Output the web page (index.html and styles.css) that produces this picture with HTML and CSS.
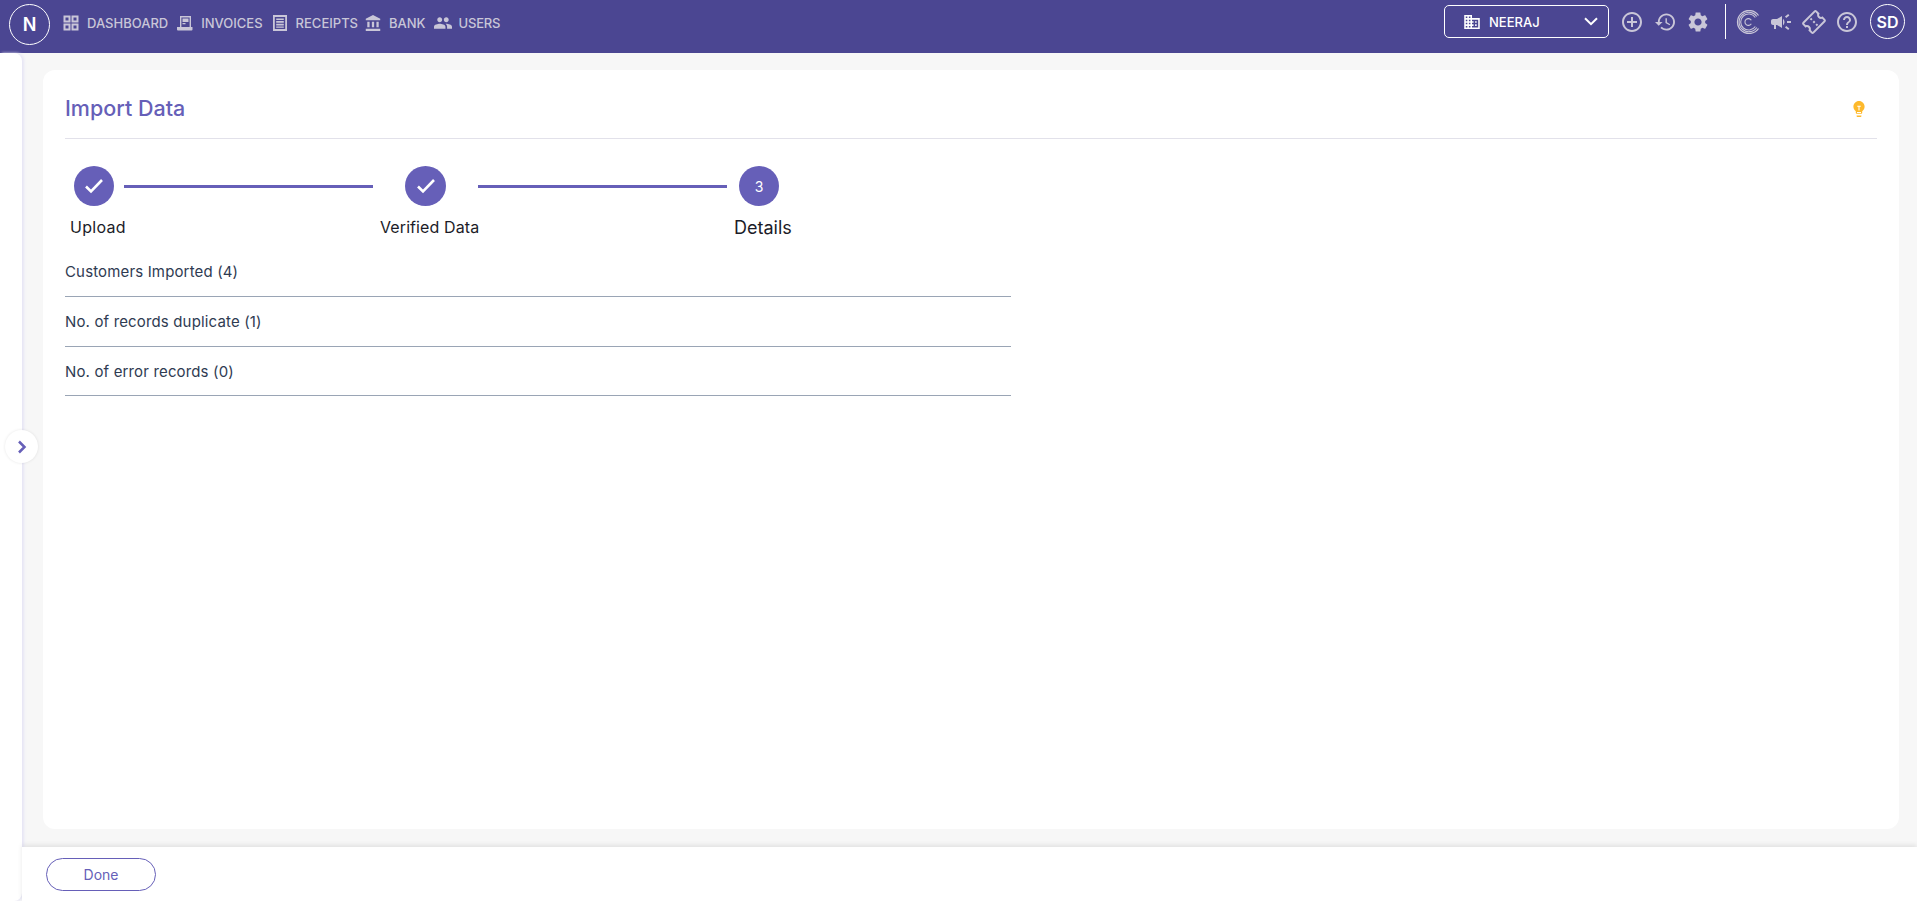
FILE: index.html
```html
<!DOCTYPE html>
<html lang="en">
<head>
    <meta charset="UTF-8">
    <title>Import Data</title>
    <link rel="stylesheet" href="styles.css">
</head>
<body>

    <!-- Top bar -->
    <header class="topbar">
        <div class="avatar brand">N</div>
        <nav class="main-nav">
            <a class="nav-item nav-dashboard">
                <svg class="nav-icon" viewBox="0 0 16 16" fill="none" stroke="currentColor" stroke-width="2"><path d="M1.500 1.500h5v5h-5zM9.500 1.500h5v5h-5zM1.500 9.500h5v5h-5zM9.500 9.500h5v5h-5z"/></svg>
                <span>DASHBOARD</span>
            </a>
            <a class="nav-item nav-invoices">
                <svg class="nav-icon" viewBox="0 0 16 16" fill="currentColor"><path d="M3 1h11v11h1.500v2.500a1 1 0 0 1-1 1H1a1 1 0 0 1-1-1V12h3zM4.400 2.400V12h8.200V2.400zM5.500 3.500h6v3.500h-6zM5.500 8h3v1.200h-3z" fill-rule="evenodd"/></svg>
                <span>INVOICES</span>
            </a>
            <a class="nav-item nav-receipts">
                <svg class="nav-icon" viewBox="0 0 16 16" fill="currentColor"><path d="M1 0h14v16H1zM2.800 2v12h10.400V2zM4.200 3.400h7.600v1.700H4.200zM4.200 6.100h7.600v1.700H4.200zM4.200 8.800h7.600v1.700H4.200zM4.200 11.400h7.600v1.300H4.200z" fill-rule="evenodd"/></svg>
                <span>RECEIPTS</span>
            </a>
            <a class="nav-item nav-bank">
                <svg class="nav-icon" viewBox="2 1 19 21" fill="currentColor"><path d="M4 10v7h3v-7H4zm6 0v7h3v-7h-3zM2 22h19v-3H2v3zm14-12v7h3v-7h-3zm-4.500-9L2 6v2h19V6l-9.500-5z"/></svg>
                <span>BANK</span>
            </a>
            <a class="nav-item nav-users">
                <svg class="nav-icon" viewBox="1 4 22 16" fill="currentColor"><path d="M16 11c1.660 0 2.990-1.340 2.990-3S17.660 5 16 5c-1.660 0-3 1.340-3 3s1.340 3 3 3zm-8 0c1.660 0 2.990-1.340 2.990-3S9.660 5 8 5C6.340 5 5 6.340 5 8s1.340 3 3 3zm0 2c-2.330 0-7 1.170-7 3.500V19h14v-2.500c0-2.330-4.670-3.500-7-3.500zm8 0c-.290 0-.620.020-.970.050 1.160.840 1.970 1.970 1.970 3.450V19h6v-2.500c0-2.330-4.670-3.500-7-3.500z"/></svg>
                <span>USERS</span>
            </a>
        </nav>

        <div class="top-actions">
            <div class="company-select">
                <svg class="company-icon" viewBox="2 3 20 18" fill="currentColor"><path d="M12 7V3H2v18h20V7H12zM6 19H4v-2h2v2zm0-4H4v-2h2v2zm0-4H4V9h2v2zm0-4H4V5h2v2zm4 12H8v-2h2v2zm0-4H8v-2h2v2zm0-4H8V9h2v2zm0-4H8V5h2v2zm10 12h-8v-2h2v-2h-2v-2h2v-2h-2V9h8v10zm-2-8h-2v2h2v-2zm0 4h-2v2h2v-2z"/></svg>
                <span class="company-name">NEERAJ</span>
                <svg class="chevron" viewBox="0 0 14 9" fill="none" stroke="currentColor" stroke-width="2"><path d="M1 1.200l6 6 6-6"/></svg>
            </div>
            <div class="icon-group">
                <svg class="action-icon" viewBox="2 2 20 20" fill="currentColor"><path d="M13 7h-2v4H7v2h4v4h2v-4h4v-2h-4V7zm-1-5C6.480 2 2 6.480 2 12s4.480 10 10 10 10-4.480 10-10S17.520 2 12 2zm0 18c-4.410 0-8-3.590-8-8s3.590-8 8-8 8 3.590 8 8-3.590 8-8 8z"/></svg>
                <svg class="action-icon" viewBox="1 3 21 18" fill="currentColor"><path d="M13 3c-4.970 0-9 4.030-9 9H1l3.890 3.890.070.140L9 12H6c0-3.870 3.130-7 7-7s7 3.130 7 7-3.130 7-7 7c-1.930 0-3.680-.790-4.940-2.060l-1.420 1.420C8.270 19.990 10.510 21 13 21c4.970 0 9-4.030 9-9s-4.030-9-9-9zm-1 5v5l4.280 2.540.720-1.210-3.500-2.080V8H12z"/></svg>
                <svg class="action-icon" viewBox="2.500 2 19 20" fill="currentColor"><path d="M19.140 12.940c.040-.300.060-.610.060-.940 0-.320-.020-.640-.070-.940l2.030-1.580c.180-.140.230-.410.120-.610l-1.920-3.320c-.120-.220-.370-.290-.590-.220l-2.390.960c-.500-.380-1.030-.700-1.620-.940l-.360-2.540c-.040-.240-.240-.410-.480-.410h-3.840c-.240 0-.430.170-.470.410l-.360 2.540c-.590.240-1.130.570-1.620.940l-2.390-.960c-.220-.080-.470 0-.590.220L2.740 8.870c-.120.210-.080.470.120.610l2.030 1.580c-.050.300-.090.630-.090.940s.020.640.070.940l-2.030 1.580c-.180.140-.230.410-.120.610l1.920 3.320c.120.220.370.290.590.220l2.390-.960c.500.380 1.030.700 1.620.940l.360 2.540c.050.240.240.410.480.410h3.840c.240 0 .440-.170.470-.410l.360-2.540c.590-.240 1.130-.560 1.620-.940l2.390.960c.220.080.470 0 .590-.220l1.920-3.320c.120-.220.070-.470-.120-.610l-2.010-1.580zM12 15.600c-1.980 0-3.600-1.620-3.600-3.600s1.620-3.600 3.600-3.600 3.600 1.620 3.600 3.600-1.620 3.600-3.600 3.600z"/></svg>
            </div>
            <div class="top-divider"></div>
            <div class="icon-group icon-group-alt">
                <svg class="logo-c" viewBox="0 0 24 24" fill="none" stroke="currentColor">
                    <path d="M22.500 5.500A11.500 11.500 0 1 0 22.500 18.500" stroke-width="1.300"/>
                    <path d="M20.800 6.500A9.700 9.700 0 1 0 20.800 17.500" stroke-width="1.100"/>
                    <path d="M19.300 7.500A8 8 0 1 0 19.300 16.500" stroke-width="1.100"/>
                    <path d="M15.300 10.300a3.400 3.400 0 1 0 0 3.400" stroke-width="1.100"/>
                </svg>
                <svg class="action-icon" viewBox="2 4 20 16" fill="currentColor"><path d="M18 11v2h4v-2h-4zm-2 6.610c.960.710 2.210 1.650 3.200 2.390.400-.530.800-1.070 1.200-1.600-.990-.740-2.240-1.680-3.200-2.400-.400.540-.800 1.080-1.200 1.610zM20.400 5.600c-.400-.530-.800-1.070-1.200-1.600-.990.740-2.240 1.680-3.200 2.400.400.530.800 1.070 1.200 1.600.960-.720 2.210-1.650 3.200-2.400zM4 9c-1.100 0-2 .900-2 2v2c0 1.100.900 2 2 2h1v4h2v-4h1l5 3V6L8 9H4zm11.500 3c0-1.330-.580-2.530-1.500-3.350v6.690c.920-.810 1.500-2.010 1.500-3.340z"/></svg>
                <svg class="ticket-icon" viewBox="0 0 24 24" fill="currentColor"><path transform="rotate(-45 12 12)" d="M22 10V6c0-1.110-.900-2-2-2H4c-1.100 0-1.990.890-1.990 2v4c1.100 0 1.990.900 1.990 2s-.890 2-2 2v4c0 1.100.900 2 2 2h16c1.100 0 2-.900 2-2v-4c-1.100 0-2-.900-2-2s.900-2 2-2zm-2-1.460c-1.190.690-2 1.990-2 3.460s.810 2.770 2 3.460V18H4v-2.540c1.190-.690 2-1.990 2-3.460 0-1.480-.800-2.770-1.990-3.460L4 6h16v2.540zM11 15h2v2h-2zm0-4h2v2h-2zm0-4h2v2h-2z"/></svg>
                <svg class="action-icon" viewBox="2 2 20 20" fill="currentColor"><path d="M11 18h2v-2h-2v2zm1-16C6.480 2 2 6.480 2 12s4.480 10 10 10 10-4.480 10-10S17.520 2 12 2zm0 18c-4.410 0-8-3.590-8-8s3.590-8 8-8 8 3.590 8 8-3.590 8-8 8zm0-14c-2.210 0-4 1.790-4 4h2c0-1.100.900-2 2-2s2 .900 2 2c0 2-3 1.750-3 5h2c0-2.250 3-2.500 3-5 0-2.210-1.790-4-4-4z"/></svg>
            </div>
            <div class="avatar user">SD</div>
        </div>
    </header>

    <div class="layout">
        <!-- Collapsed sidebar -->
        <aside class="sidebar"></aside>
        <button class="sidebar-toggle" title="Expand">
            <svg viewBox="0 0 10 14" fill="none" stroke="currentColor" stroke-width="2.500"><path d="M2 1.500l5.500 5.500L2 12.500"/></svg>
        </button>

        <div class="content">
            <main class="page">
                <section class="card">
                    <div class="card-head">
                        <h1>Import Data</h1>
                        <svg class="bulb" viewBox="5 2 14 20"><path fill="#fdb92c" d="M9 21c0 .550.450 1 1 1h4c.550 0 1-.450 1-1v-1H9v1zm3-19C8.140 2 5 5.140 5 9c0 2.380 1.190 4.470 3 5.740V17c0 .550.450 1 1 1h6c.550 0 1-.450 1-1v-2.260c1.810-1.270 3-3.360 3-5.740 0-3.860-3.140-7-7-7z"/><path fill="none" stroke="#fff" stroke-width="1.300" d="M9.800 8.500h4.400M12 8.500V14M9.500 16.300h5"/></svg>
                    </div>

                    <!-- Stepper -->
                    <div class="step-track">
                        <div class="step-dot step-one">
                            <svg viewBox="0 0 20 16" fill="none" stroke="#fff" stroke-width="2.600"><path d="M2 8.500l5 5L18 2"/></svg>
                        </div>
                        <div class="step-line"></div>
                        <div class="step-dot step-two">
                            <svg viewBox="0 0 20 16" fill="none" stroke="#fff" stroke-width="2.600"><path d="M2 8.500l5 5L18 2"/></svg>
                        </div>
                        <div class="step-line"></div>
                        <div class="step-dot step-three">3</div>
                    </div>
                    <div class="step-labels">
                        <span class="step-label label-upload">Upload</span>
                        <span class="step-label label-verified">Verified Data</span>
                        <span class="step-label label-details">Details</span>
                    </div>

                    <!-- Import result -->
                    <ul class="result-list">
                        <li>Customers Imported (4)</li>
                        <li>No. of records duplicate (1)</li>
                        <li>No. of error records (0)</li>
                    </ul>
                </section>
            </main>

            <footer class="page-footer">
                <button class="btn-done">Done</button>
            </footer>
        </div>
    </div>

</body>
</html>
```

FILE: styles.css
```css
/* General Reset */
* {
    margin: 0;
    padding: 0;
    box-sizing: border-box;
}

body {
    font-family: 'Inter', 'Open Sans', sans-serif;
    background-color: #f7f7f7;
    height: 100vh;
    display: flex;
    flex-direction: column;
    overflow: hidden;
}

/* Top bar */
.topbar {
    height: 53px;
    flex-shrink: 0;
    background-color: #4b4692;
    display: flex;
    align-items: center;
    padding: 0 12px 5px 9px;
}

.avatar {
    border: 1px solid #fff;
    border-radius: 50%;
    color: #fff;
    font-weight: 600;
    display: flex;
    justify-content: center;
    align-items: center;
}

.brand {
    width: 41px;
    height: 41px;
    font-size: 18px;
    margin-right: 13px;
}

.user {
    width: 35px;
    height: 35px;
    font-size: 16px;
}

.main-nav {
    display: flex;
    align-items: center;
    margin-bottom: 2px;
}

.nav-item {
    display: flex;
    align-items: center;
    gap: 8px;
    color: #c9c6d8;
    font-size: 13px;
    font-weight: 500;
    margin-right: 9px;
}

.nav-receipts {
    margin-right: 7px;
}

.nav-bank {
    margin-right: 8px;
}

.nav-icon {
    width: 16px;
    height: 16px;
}

.nav-users {
    gap: 7px;
    letter-spacing: -0.2px;
}

.nav-users .nav-icon {
    width: 18px;
    height: 14px;
}

.top-actions {
    margin-left: auto;
    margin-bottom: 5px;
    display: flex;
    align-items: center;
}

.company-select {
    width: 165px;
    height: 33px;
    border: 1px solid #fff;
    border-radius: 5px;
    color: #fff;
    display: flex;
    align-items: center;
    padding: 0 10px 0 19px;
    margin-right: 13px;
}

.company-icon {
    width: 16px;
    height: 14px;
    margin-right: 9px;
}

.company-name {
    font-size: 13px;
    font-weight: 500;
}

.chevron {
    width: 14px;
    height: 9px;
    margin-left: auto;
}

.icon-group {
    display: flex;
    align-items: center;
    gap: 13px;
    color: #c9c6d8;
}

.action-icon {
    width: 20px;
    height: 20px;
}

.top-divider {
    width: 1px;
    height: 35px;
    background-color: #fff;
    margin: 0 10px 0 17px;
}

.icon-group-alt {
    gap: 11px;
    margin-right: 13px;
}

.logo-c {
    width: 24px;
    height: 24px;
}

.ticket-icon {
    width: 24px;
    height: 24px;
}

/* Body layout */
.layout {
    flex: 1;
    display: flex;
    position: relative;
    min-height: 0;
}

.sidebar {
    width: 22px;
    flex-shrink: 0;
    background-color: #fff;
    border-radius: 0 8px 8px 0;
    box-shadow: 2px 0 3px #e6e5f5;
}

.sidebar-toggle {
    position: absolute;
    left: 5px;
    top: 377px;
    width: 33px;
    height: 33px;
    border: none;
    border-radius: 50%;
    background-color: #fff;
    color: #665fb8;
    display: flex;
    justify-content: center;
    align-items: center;
    box-shadow: 0 0 3px rgba(0, 0, 0, 0.1);
}

.sidebar-toggle svg {
    width: 10px;
    height: 14px;
}

.content {
    flex: 1;
    min-width: 0;
    display: flex;
    flex-direction: column;
}

.page {
    flex: 1;
    padding: 17px 18px 18px 21px;
}

.card {
    height: 100%;
    background-color: #fff;
    border-radius: 12px;
    padding: 0 22px;
}

.card-head {
    height: 69px;
    display: flex;
    justify-content: space-between;
    align-items: center;
    border-bottom: 1px solid #e2e1ea;
    padding: 7px 12px 0 0;
}

.card-head h1 {
    font-size: 21.500px;
    font-weight: 500;
    color: #665fb8;
}

.bulb {
    width: 12px;
    height: 16px;
    margin-top: 3px;
}

/* Stepper */
.step-track {
    display: flex;
    align-items: center;
    margin: 27px 0 0 9px;
}

.step-dot {
    width: 40px;
    height: 40px;
    border-radius: 50%;
    background-color: #665fb8;
    color: #fff;
    font-size: 14px;
    display: flex;
    justify-content: center;
    align-items: center;
}

.step-dot svg {
    width: 20px;
    height: 16px;
}

.step-line {
    width: 249px;
    height: 3px;
    background-color: #665fb8;
}

.step-one {
    margin-right: 10px;
}

.step-two {
    width: 41px;
    margin: 0 32px;
}

.step-three {
    margin-left: 12px;
}

.step-labels {
    display: flex;
    align-items: center;
    height: 24px;
    margin-top: 9px;
    color: #1c1c28;
    font-size: 16px;
}

.label-upload {
    margin-left: 5px;
    width: 310px;
    letter-spacing: 0.3px;
}

.label-verified {
    width: 354px;
    letter-spacing: 0.1px;
}

.label-details {
    font-size: 18px;
}

/* Result rows */
.result-list {
    list-style: none;
    width: 946px;
    margin-top: 8px;
    color: #2f3b52;
    font-size: 15px;
    letter-spacing: 0.15px;
}

.result-list li {
    height: 50px;
    display: flex;
    align-items: center;
    border-bottom: 1px solid #9aa5b5;
}

.result-list li:last-child {
    height: 49px;
}

/* Footer */
.page-footer {
    height: 54px;
    flex-shrink: 0;
    background-color: #fff;
    box-shadow: 0 -2px 5px rgba(0, 0, 0, 0.09);
    display: flex;
    align-items: center;
    padding: 1px 0 0 24px;
}

.btn-done {
    width: 110px;
    height: 33px;
    background-color: #fff;
    border: 1px solid #665fb8;
    border-radius: 17px;
    color: #665fb8;
    font-family: inherit;
    font-size: 14px;
}
```
